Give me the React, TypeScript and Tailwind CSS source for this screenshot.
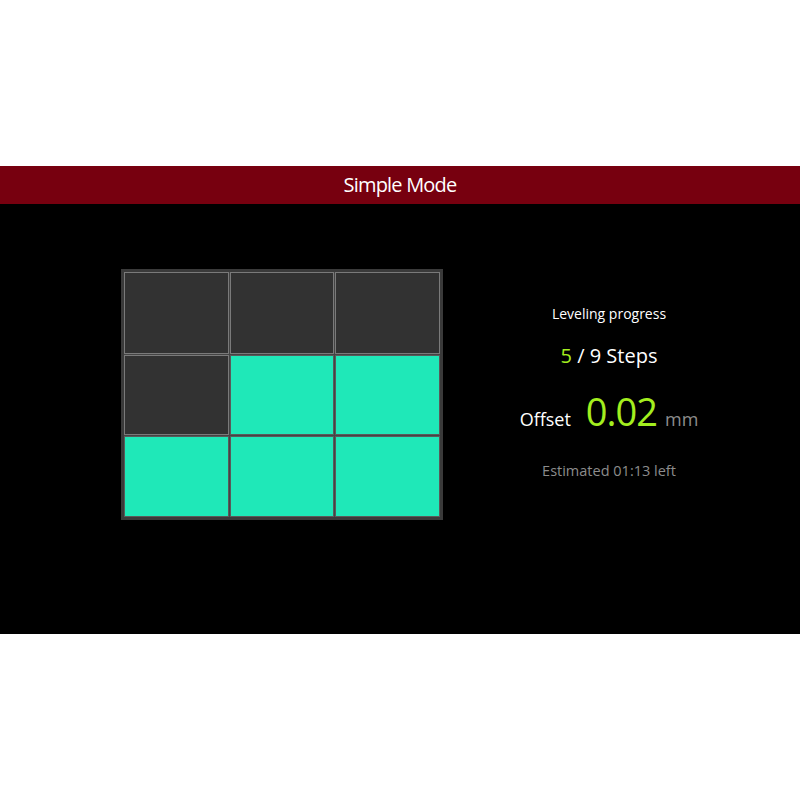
import React from 'react';

const cells = [false, false, false, false, true, true, true, true, true];

export default function App() {
  return (
    <div className="w-[800px] h-[800px] bg-white flex flex-col justify-center" style={{ fontFamily: '"Open Sans", "Noto Sans", sans-serif' }}>
      <div className="h-[38px] bg-[#77000f] flex items-center justify-center">
        <span className="text-white text-[20px] tracking-[-0.8px]">Simple Mode</span>
      </div>
      <div className="h-[430px] bg-black flex items-start">
        {/* grid of probe points */}
        <div className="ml-[121px] mt-[65px] bg-[#3a3a3a] p-[3px]">
          <div className="grid grid-cols-[105px_104px_105px] grid-rows-[82px_80px_81px] gap-[1px] bg-[#444]">
            {cells.map((done, i) => (
              <div
                key={i}
                className={done ? 'bg-[#1fe8b8] border border-[#5a5a5a]' : 'bg-[#323232] border border-[#7a7a7a]'}
              />
            ))}
          </div>
        </div>
        <div className="ml-[16px] w-[300px] mt-[100px] flex flex-col items-center text-white">
          <div className="text-[14px] leading-[20px]">Leveling progress</div>
          <div className="mt-[20px] text-[20px] leading-[24px]">
            <span className="text-[#a3ee1f]">5</span> / 9 Steps
          </div>
          <div className="mt-[20px] flex items-baseline">
            <span className="text-[18px]">Offset</span>
            <span className="ml-[15px] text-[38px] leading-[46px] text-[#a3ee1f] tracking-[-1px]">0.02</span>
            <span className="ml-[8px] text-[18px] text-[#8c8c8c]">mm</span>
          </div>
          <div className="mt-[26px] text-[14.5px] text-[#8c8c8c]">Estimated 01:13 left</div>
        </div>
      </div>
    </div>
  );
}
